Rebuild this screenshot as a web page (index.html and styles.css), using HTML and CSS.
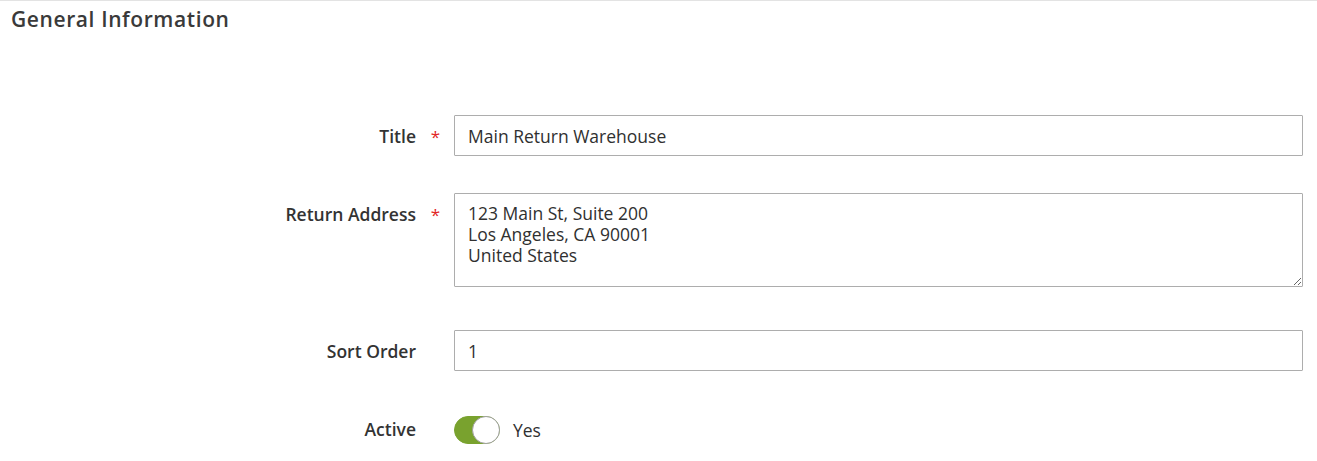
FILE: index.html
```html
<!DOCTYPE html>
<html>
<head>
	<title>General Information</title>
	<link rel="stylesheet" href="styles.css">
</head>
<body>
	<div class="section">
		<div class="section-title">General Information</div>

		<form class="fieldset">
			<div class="field">
				<label class="label" for="title">Title</label>
				<span class="mark">*</span>
				<div class="control">
					<input class="input" id="title" type="text" value="Main Return Warehouse">
				</div>
			</div>

			<div class="field">
				<label class="label" for="address">Return Address</label>
				<span class="mark">*</span>
				<div class="control">
					<textarea class="input textarea" id="address">123 Main St, Suite 200
Los Angeles, CA 90001
United States</textarea>
				</div>
			</div>

			<div class="field">
				<label class="label" for="sort">Sort Order</label>
				<span class="mark"></span>
				<div class="control">
					<input class="input" id="sort" type="text" value="1">
				</div>
			</div>

			<div class="field field-switch">
				<label class="label">Active</label>
				<span class="mark"></span>
				<div class="control switch-row">
					<span class="switch on"><span class="knob"></span></span>
					<span class="switch-text">Yes</span>
				</div>
			</div>
		</form>
	</div>
</body>
</html>
```

FILE: styles.css
```css
* {
	margin: 0;
	padding: 0;
	box-sizing: border-box;
}

body {
	font-family: "Open Sans", "Liberation Sans", sans-serif;
	color: #303030;
	background: #fff;
}

.section {
	border-top: 1px solid #e3e3e3;
	padding: 6px 14px 0 11px;
}

.section-title {
	font-size: 21px;
	line-height: 25px;
	font-weight: 600;
	letter-spacing: 0.6px;
	color: #3a3a3a;
}

.fieldset {
	display: flex;
	flex-direction: column;
	gap: 37px;
	margin-top: 83px;
	margin-left: -11px;
}

.field {
	display: grid;
	grid-template-columns: 416px 38px 1fr;
}

.label {
	text-align: right;
	font-size: 17.5px;
	line-height: 20.8px;
	font-weight: 600;
	color: #333;
	padding-top: 11px;
}

.mark {
	text-align: center;
	color: #e22626;
	font-size: 17px;
	line-height: 20.8px;
	padding-top: 12px;
	padding-left: 1px;
}

.input {
	display: block;
	width: 100%;
	height: 41px;
	border: 1px solid #adadad;
	border-radius: 1px;
	padding: 0 13px;
	font-family: "Open Sans", "Liberation Sans", sans-serif;
	font-size: 17.5px;
	color: #303030;
	background: #fff;
	outline: none;
}

.textarea {
	height: 94px;
	padding: 9px 13px;
	line-height: 20.8px;
	resize: vertical;
	margin-bottom: 6px;
}

.switch-row {
	display: flex;
	align-items: center;
	gap: 13px;
	padding-top: 8px;
}

.switch {
	position: relative;
	display: block;
	width: 46px;
	height: 28px;
	border-radius: 14px;
	border: 1px solid #adadad;
	background: #e3e3e3;
}

.switch.on {
	background: #79a22e;
	border-color: #79a22e;
}

.knob {
	position: absolute;
	top: -1px;
	right: -1px;
	width: 28px;
	height: 28px;
	border-radius: 50%;
	background: #fff;
	border: 1px solid #a0a0a0;
}

.switch-text {
	font-size: 17.5px;
	line-height: 20.8px;
	color: #303030;
}
```
